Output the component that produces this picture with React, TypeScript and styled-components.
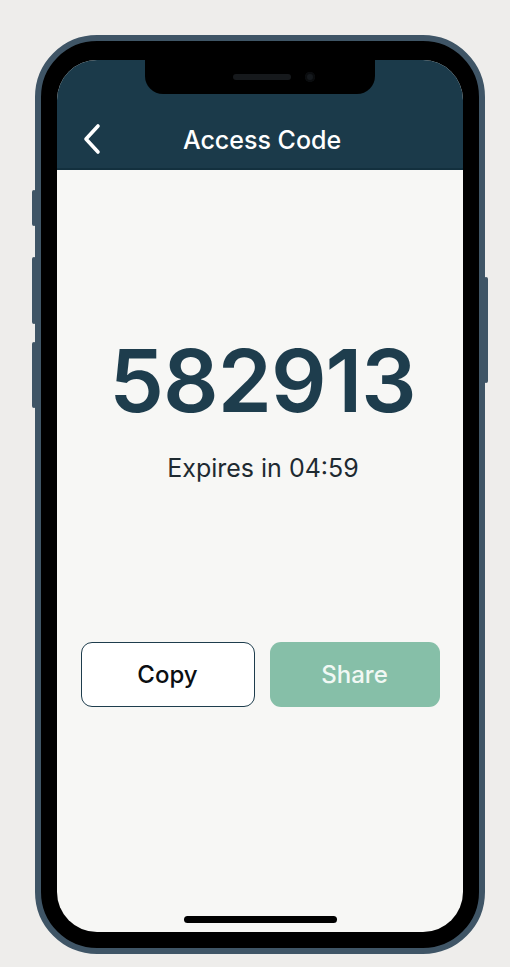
import styled, { createGlobalStyle } from "styled-components"

const GlobalStyle = createGlobalStyle`
  html, body {
    margin: 0;
    padding: 0;
    background: #eeedeb;
  }
  body {
    font-family: Inter, "Noto Sans", "Liberation Sans", sans-serif;
  }
`

const Page = styled.div`
  width: 510px;
  height: 967px;
  padding: 35px 0 0 35px;
  box-sizing: border-box;
`

const Phone = styled.div`
  position: relative;
  width: 450px;
  height: 919px;
  box-sizing: border-box;
  padding: 19px 16px 16px;
  background: #000;
  border: 6px solid #3f5566;
  border-radius: 62px;
`

const SideButton = styled.span<{ $side: "left" | "right"; $top: number; $h: number }>`
  position: absolute;
  ${(p) => (p.$side === "left" ? "left: -9px;" : "right: -9px;")}
  top: ${(p) => p.$top}px;
  width: 4px;
  height: ${(p) => p.$h}px;
  background: #3f5566;
  border-radius: 2px;
`

const Screen = styled.div`
  position: relative;
  height: 100%;
  display: flex;
  flex-direction: column;
  background: #f7f7f5;
  border-radius: 40px;
  overflow: hidden;
`

const Notch = styled.div`
  position: absolute;
  z-index: 2;
  top: 0;
  left: 50%;
  transform: translateX(-50%);
  width: 230px;
  height: 34px;
  background: #000;
  border-radius: 0 0 18px 18px;
  display: flex;
  align-items: center;
  justify-content: center;
  gap: 14px;
  padding-left: 28px;
  box-sizing: border-box;
`

const Speaker = styled.span`
  width: 58px;
  height: 6px;
  border-radius: 3px;
  background: #16191c;
`

const Camera = styled.span`
  width: 10px;
  height: 10px;
  border-radius: 50%;
  background: #15191d;
  box-shadow: inset 0 0 0 2px #0a0c0e;
`

const Header = styled.header`
  height: 110px;
  flex-shrink: 0;
  background: #1b3a4a;
  border-bottom: 2px solid #13303e;
  box-sizing: border-box;
  display: flex;
  align-items: flex-end;
  padding-bottom: 13px;
  position: relative;
`

const BackButton = styled.button`
  position: absolute;
  left: 20px;
  bottom: 12px;
  width: 30px;
  height: 34px;
  padding: 0;
  border: none;
  background: none;
  display: flex;
  align-items: center;
  justify-content: center;
`

const Title = styled.h1`
  flex: 1;
  margin: 0;
  text-align: center;
  color: #ffffff;
  font-size: 25px;
  font-weight: 500;
  line-height: 30px;
  padding-left: 4px;
`

const Body = styled.main`
  flex: 1;
  display: flex;
  flex-direction: column;
  align-items: center;
  padding: 167px 23px 0;
`

const Code = styled.div`
  font-size: 87px;
  font-weight: 600;
  color: #1e3d4d;
  line-height: 87px;
  letter-spacing: -1px;
  padding-left: 5px;
`

const Expires = styled.div`
  margin-top: 29px;
  font-size: 25px;
  color: #1e2a31;
  line-height: 30px;
  padding-left: 6px;
`

const Actions = styled.div`
  margin-top: 159px;
  width: 100%;
  display: grid;
  grid-template-columns: 174px 170px;
  justify-content: center;
  gap: 15px;
`

const ActionButton = styled.button<{ $primary?: boolean }>`
  height: 65px;
  border-radius: 11px;
  font-family: inherit;
  font-size: 24px;
  font-weight: 500;
  cursor: pointer;
  border: ${(p) => (p.$primary ? "none" : "1.5px solid #1e3d4d")};
  background: ${(p) => (p.$primary ? "#86bfa8" : "#ffffff")};
  color: ${(p) => (p.$primary ? "#f1f8f4" : "#0b0f12")};
`

const HomeBar = styled.div`
  margin: auto auto 9px;
  width: 153px;
  height: 7px;
  border-radius: 4px;
  background: #000;
`

export default function App() {
  return (
    <Page>
      <GlobalStyle />
      <Phone>
        <SideButton $side="left" $top={149} $h={36} />
        <SideButton $side="left" $top={216} $h={67} />
        <SideButton $side="left" $top={301} $h={66} />
        <SideButton $side="right" $top={236} $h={106} />
        <Screen>
          <Notch>
            <Speaker />
            <Camera />
          </Notch>
          <Header>
            <BackButton aria-label="Back">
              <svg width="22" height="32" viewBox="0 0 22 32" fill="none">
                <path
                  d="M17 3 L5 16 L17 29"
                  stroke="#ffffff"
                  strokeWidth="3.6"
                  strokeLinecap="round"
                  strokeLinejoin="round"
                />
              </svg>
            </BackButton>
            <Title>Access Code</Title>
          </Header>
          <Body>
            <Code>582913</Code>
            <Expires>Expires in 04:59</Expires>
            <Actions>
              <ActionButton>Copy</ActionButton>
              <ActionButton $primary>Share</ActionButton>
            </Actions>
          </Body>
          <HomeBar />
        </Screen>
      </Phone>
    </Page>
  )
}
